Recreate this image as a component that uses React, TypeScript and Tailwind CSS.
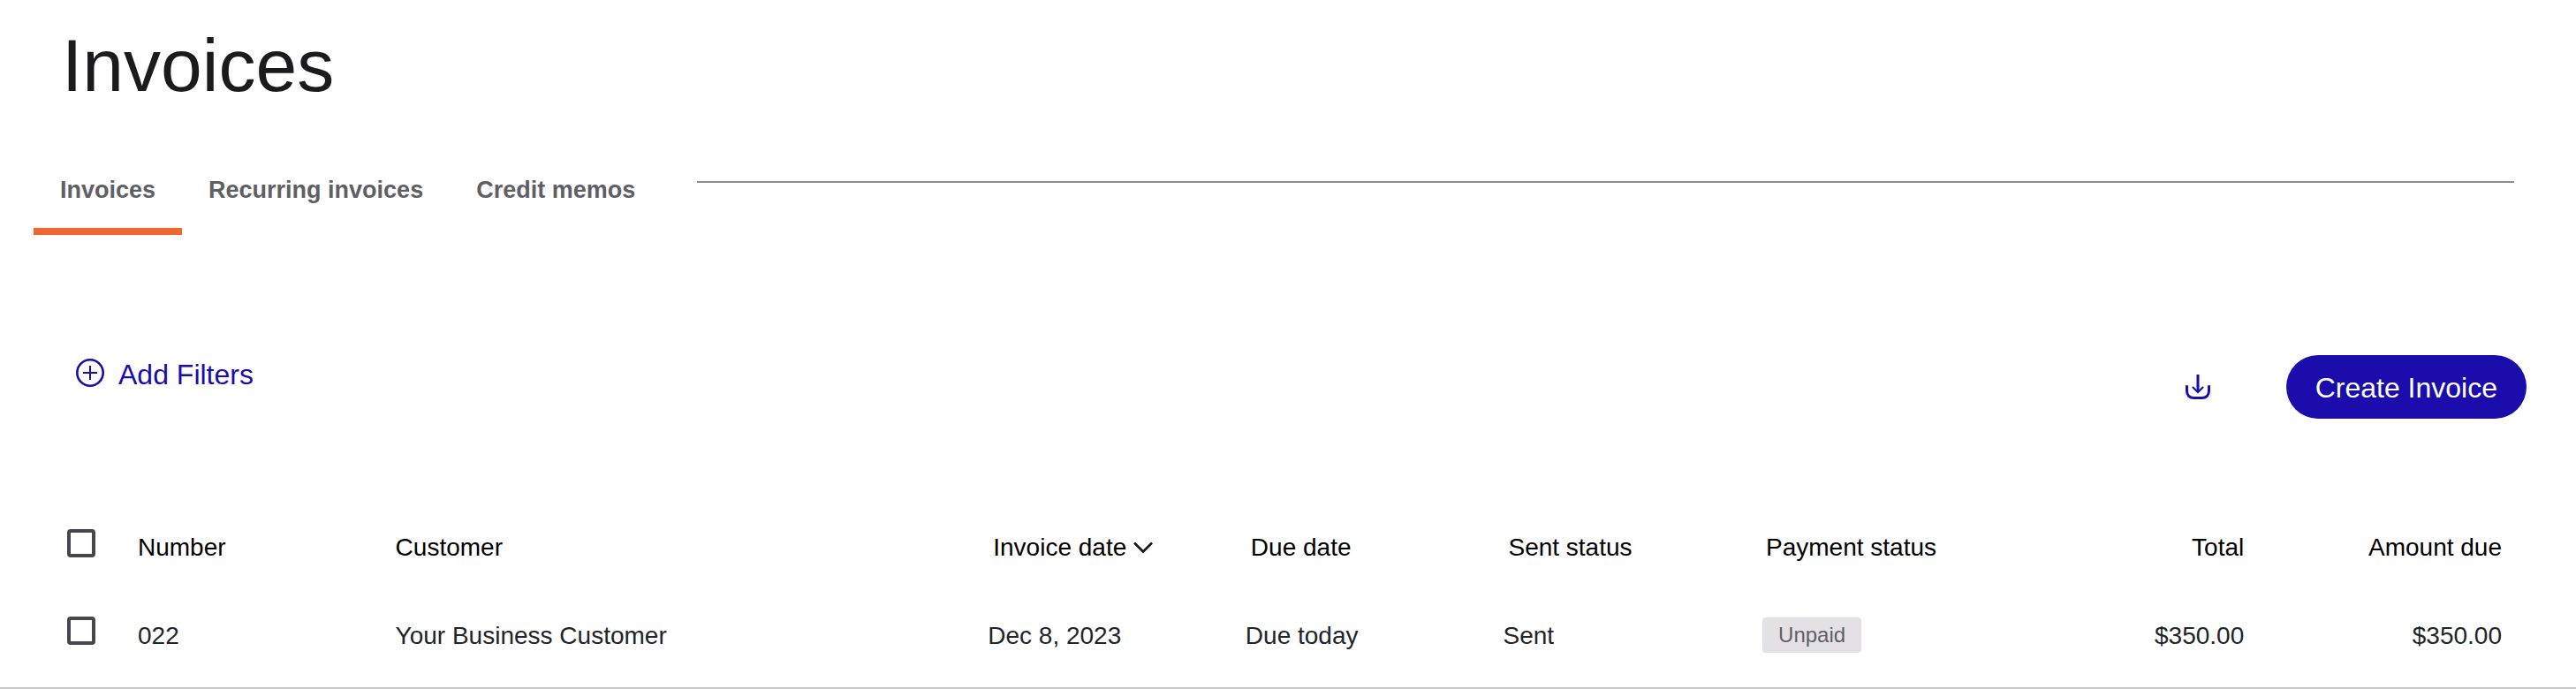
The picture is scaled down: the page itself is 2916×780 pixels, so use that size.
import { useState } from 'react';

interface Invoice {
  number: string;
  customer: string;
  invoiceDate: string;
  dueDate: string;
  sentStatus: string;
  paymentStatus: string;
  total: string;
  amountDue: string;
}

const TABS = ['Invoices', 'Recurring invoices', 'Credit memos'];

const INVOICES: Invoice[] = [
  {
    number: '022',
    customer: 'Your Business Customer',
    invoiceDate: 'Dec 8, 2023',
    dueDate: 'Due today',
    sentStatus: 'Sent',
    paymentStatus: 'Unpaid',
    total: '$350.00',
    amountDue: '$350.00',
  },
];

function PlusCircleIcon() {
  return (
    <svg width="32" height="32" viewBox="0 0 32 32" fill="none" stroke="currentColor" aria-hidden="true">
      <circle cx="16" cy="16" r="14.7" strokeWidth="2.6" />
      <path d="M16 8v16M8 16h16" strokeWidth="2" />
    </svg>
  );
}

function DownloadIcon() {
  return (
    <svg width="28" height="28" viewBox="0 0 28 28" fill="none" stroke="currentColor" aria-hidden="true">
      <path d="M1.5 12.3v6.2c0 5 3 8 8 8h9c5 0 8-3 8-8v-6.2" strokeWidth="3" />
      <path d="M14 0v20" strokeWidth="3" />
      <path d="M7.8 14l6.2 6 6.2-6" strokeWidth="2" />
    </svg>
  );
}

function ChevronDownIcon() {
  return (
    <svg width="22" height="14" viewBox="0 0 22 14" fill="none" stroke="#1b1b1d" aria-hidden="true">
      <path d="M1 1.5l10 10 10-10" strokeWidth="2.8" />
    </svg>
  );
}

interface CheckboxProps {
  label: string;
  checked: boolean;
  onChange: (checked: boolean) => void;
}

function Checkbox({ label, checked, onChange }: CheckboxProps) {
  return (
    <input
      type="checkbox"
      aria-label={label}
      checked={checked}
      onChange={(e) => onChange(e.target.checked)}
      className="block size-8 appearance-none rounded border-4 border-[#47474d] bg-white checked:bg-[#1a0dab]"
    />
  );
}

function InvoiceTable() {
  const [selected, setSelected] = useState<string[]>([]);
  const allSelected = selected.length === INVOICES.length;

  const toggle = (number: string, on: boolean) =>
    setSelected((prev) => (on ? [...prev, number] : prev.filter((n) => n !== number)));

  return (
    <table className="w-full table-fixed text-left text-[28px] leading-9">
      <colgroup>
        <col className="w-35" />
        <col className="w-[10%]" />
        <col className="w-[23%]" />
        <col className="w-[10%]" />
        <col className="w-[10%]" />
        <col className="w-[10%]" />
        <col className="w-[10%]" />
        <col className="w-[10%]" />
        <col />
      </colgroup>
      <thead>
        <tr className="h-24 align-top text-black *:font-normal">
          <th scope="col" className="pt-[5px] pl-19">
            <Checkbox
              label="Select all invoices"
              checked={allSelected}
              onChange={(on) => setSelected(on ? INVOICES.map((i) => i.number) : [])}
            />
          </th>
          <th scope="col" className="pt-2 pl-4">Number</th>
          <th scope="col" className="pt-2 pl-4">Customer</th>
          <th scope="col" aria-sort="descending" className="pt-2 pl-[22px]">
            <button type="button" className="flex items-center gap-2 whitespace-nowrap">
              Invoice date
              <ChevronDownIcon />
            </button>
          </th>
          <th scope="col" className="pt-2 pl-[22px]">Due date</th>
          <th scope="col" className="pt-2 pl-[22px]">Sent status</th>
          <th scope="col" className="pt-2 pl-[22px]">Payment status</th>
          <th scope="col" className="pt-2 pr-5 text-right">Total</th>
          <th scope="col" className="pt-2 pr-21 text-right">Amount due</th>
        </tr>
      </thead>
      <tbody>
        {INVOICES.map((invoice) => (
          <tr key={invoice.number} className="h-[89px] border-b-2 border-[#c5c5cc] align-top text-[#212529]">
            <td className="pt-2 pl-19">
              <Checkbox
                label={`Select invoice ${invoice.number}`}
                checked={selected.includes(invoice.number)}
                onChange={(on) => toggle(invoice.number, on)}
              />
            </td>
            <td className="pt-3 pl-4">{invoice.number}</td>
            <td className="pt-3 pl-4">{invoice.customer}</td>
            <td className="pt-3 pl-4">{invoice.invoiceDate}</td>
            <td className="pt-3 pl-4">{invoice.dueDate}</td>
            <td className="pt-3 pl-4">{invoice.sentStatus}</td>
            <td className="pt-[9px] pl-[18px]">
              <span className="block w-fit rounded bg-[#e3e1e6] px-[18px] text-2xl leading-10 text-[#5f5f66]">
                {invoice.paymentStatus}
              </span>
            </td>
            <td className="pt-3 pr-5 text-right">{invoice.total}</td>
            <td className="pt-3 pr-21 text-right">{invoice.amountDue}</td>
          </tr>
        ))}
      </tbody>
    </table>
  );
}

export default function App() {
  const [activeTab, setActiveTab] = useState('Invoices');

  return (
    <main className="bg-white font-['Liberation_Sans',Arial,sans-serif]">
      <h1 className="px-[70px] pt-6 text-[84px] leading-[100px] text-[#1b1b1d]">Invoices</h1>

      <div className="mt-14 flex items-start pr-[70px] pl-[38px]">
        <div role="tablist" className="flex">
          {TABS.map((tab) => (
            <button
              key={tab}
              type="button"
              role="tab"
              aria-selected={tab === activeTab}
              onClick={() => setActiveTab(tab)}
              className={`h-[86px] border-b-8 px-[30px] pb-2 text-[27px] leading-8 font-bold whitespace-nowrap text-[#5f5f66] ${
                tab === activeTab ? 'border-[#ee6830]' : 'border-transparent'
              }`}
            >
              {tab}
            </button>
          ))}
        </div>
        <hr className="mt-[25px] ml-10 grow border-t-2 border-[#8d8d96]" />
      </div>

      <div className="mt-34 flex items-start justify-between pr-14 pl-[86px] text-[32px] text-[#1a0dab]">
        <button type="button" className="flex items-start gap-4 leading-11">
          <span className="pt-1">
            <PlusCircleIcon />
          </span>
          Add Filters
        </button>
        <div className="flex items-center gap-[86px]">
          <button type="button" aria-label="Download">
            <DownloadIcon />
          </button>
          <button type="button" className="rounded-full bg-[#1a0dab] px-[33px] pt-0.5 leading-[70px] text-white">
            Create Invoice
          </button>
        </div>
      </div>

      <div className="mt-30">
        <InvoiceTable />
      </div>
    </main>
  );
}
